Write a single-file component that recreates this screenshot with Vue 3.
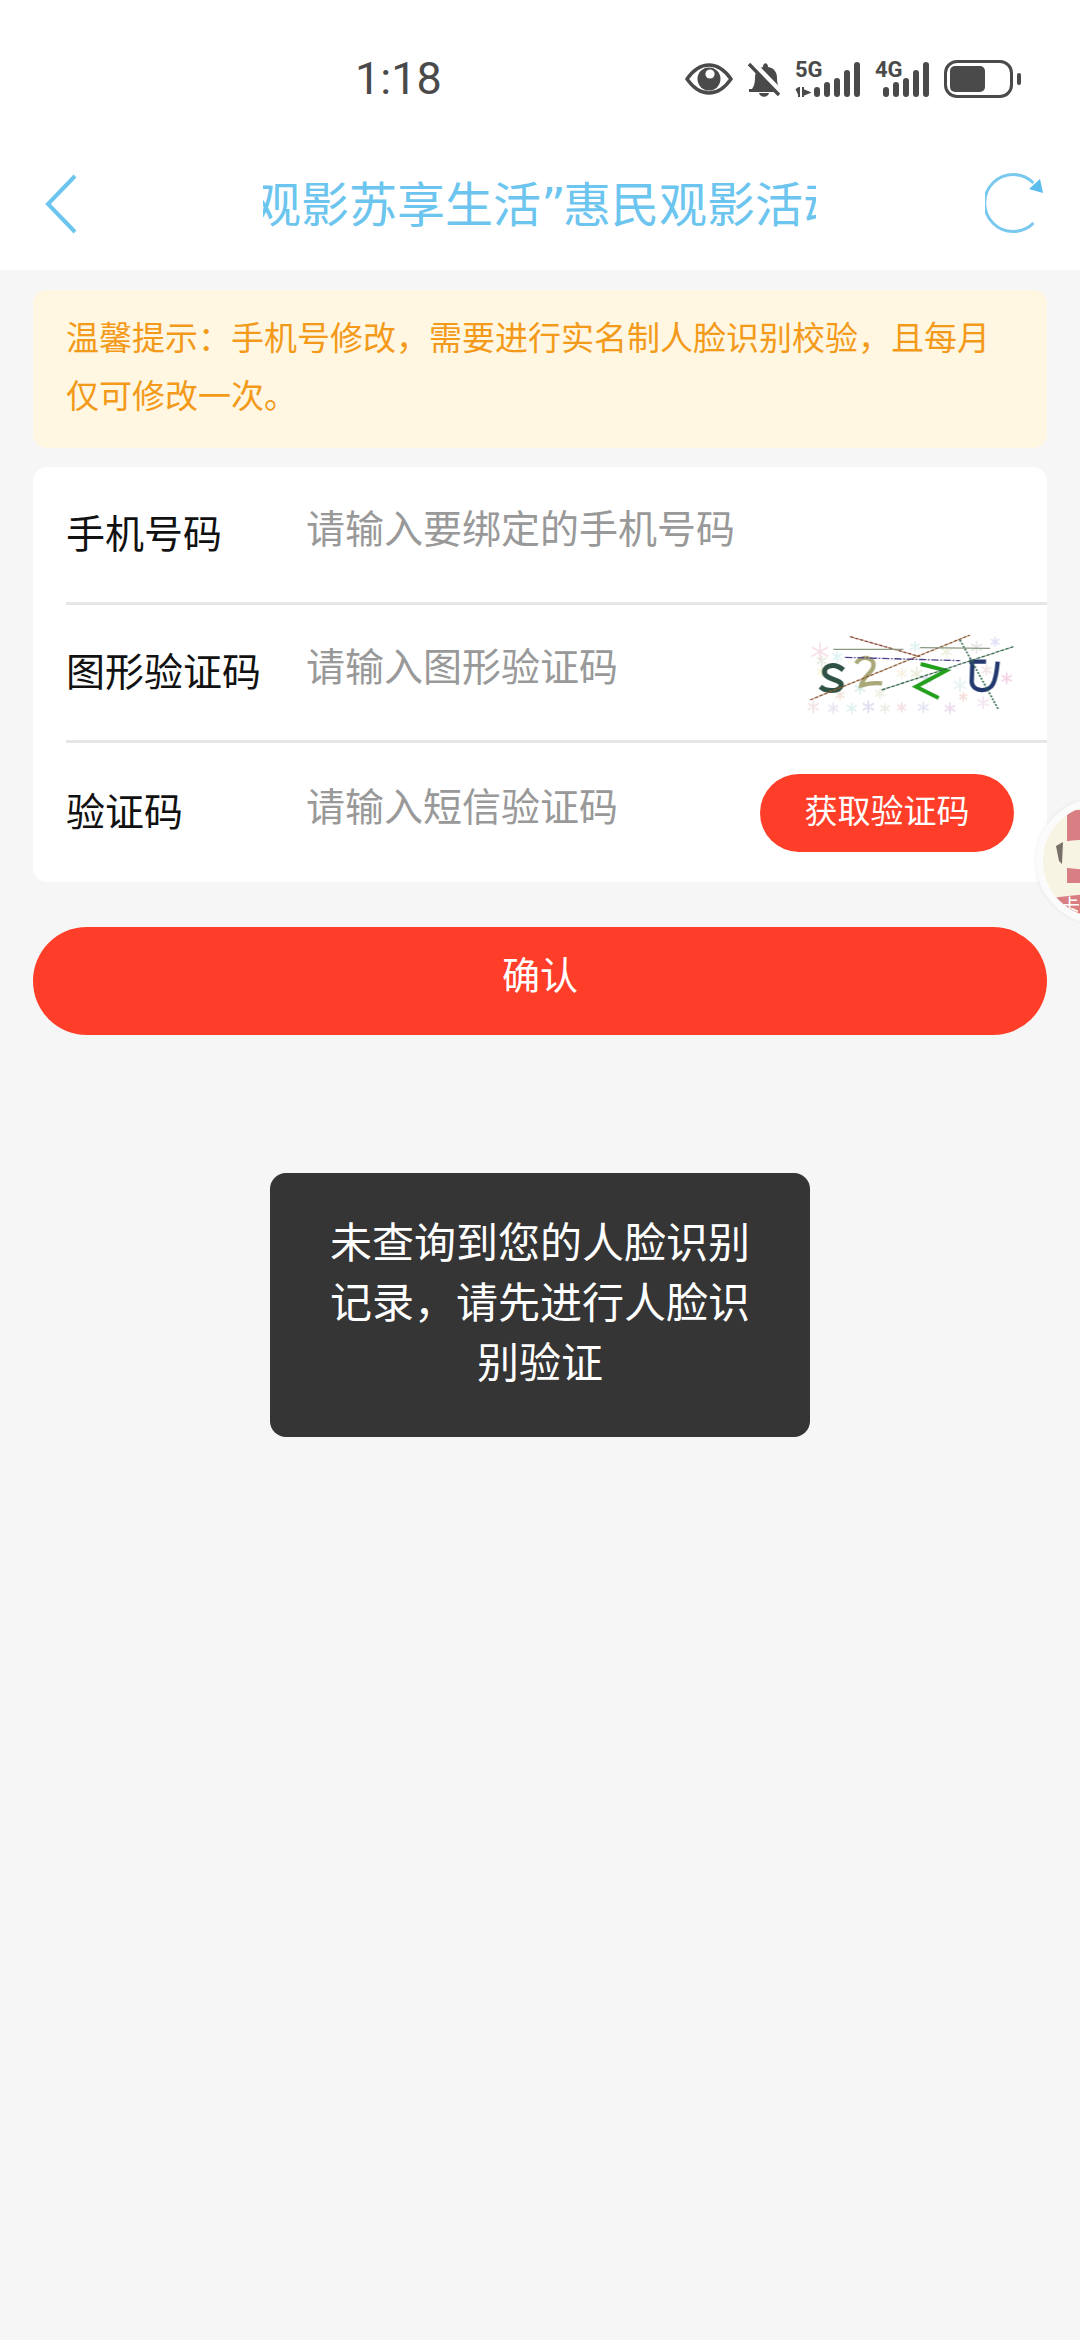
<template>
  <div class="page">
    <div class="statusbar">
      <span class="time">1:18</span>
      <div class="status-icons">
        <svg viewBox="0 0 48 32" width="48" height="32">
          <path d="M2 16C9 6 16 2 24 2s15 4 22 14c-7 10-14 14-22 14S9 26 2 16z" fill="none" stroke="#4a4a4a" stroke-width="3.4" />
          <circle cx="24" cy="16" r="11.5" fill="#4a4a4a" />
          <path d="M14 13a5.5 5.5 0 0 0 10 3 6 6 0 0 1-4-8c-3 0-5 2-6 5z" fill="#4a4a4a" />
          <circle cx="25" cy="11" r="4.6" fill="#fff" />
        </svg>
        <svg viewBox="0 0 32 36" width="32" height="36">
          <path d="M4 28c2-3 3-6 3-11 0-6 3-10 8-11 0-5 5-5 5 0 6 1 9 5 9 11 0 5 1 8 3 11z" fill="#4a4a4a" />
          <path d="M1 28h30v3H1zM11 32h10c-1 5-9 5-10 0z" fill="#4a4a4a" />
          <path d="M4 1l30 31" stroke="#fff" stroke-width="5" />
          <path d="M1 3l30 31" stroke="#4a4a4a" stroke-width="3.4" />
        </svg>
        <div class="signal">
          <div class="net net-5g">
            <b>5G</b>
            <svg viewBox="0 0 16 10" width="16" height="10">
              <path d="M1 3l3-2v9M8 0v10M8 3l6 2.5-6 2.5z" stroke="#4a4a4a" stroke-width="2" fill="#4a4a4a" />
            </svg>
          </div>
          <div class="bars">
            <i v-for="h in bars" :key="h" :style="{ height: h + 'px' }"></i>
          </div>
        </div>
        <div class="signal">
          <div class="net net-4g"><b>4G</b></div>
          <div class="bars">
            <i v-for="h in bars" :key="h" :style="{ height: h + 'px' }"></i>
          </div>
        </div>
        <div class="battery">
          <div class="battery-body"><div class="battery-fill"></div></div>
          <div class="battery-tip"></div>
        </div>
      </div>
    </div>

    <div class="navbar">
      <svg class="nav-back" viewBox="0 0 32 60" width="32" height="60">
        <path d="M30 2L3 30l27 28" fill="none" stroke="#6cc5ee" stroke-width="4" />
      </svg>
      <div class="nav-title"><span>观影苏享生活<em>”</em>惠民观影活动</span></div>
      <svg class="nav-refresh" viewBox="0 0 60 62" width="60" height="62">
        <path d="M48.500 51A28.500 28.500 0 1 1 48.500 11" fill="none" stroke="#79c9ef" stroke-width="3" />
        <path d="M55 7L58 21L44 17z" fill="#5cbcec" />
      </svg>
    </div>

    <div class="content">
      <div class="notice">温馨提示：手机号修改，需要进行实名制人脸识别校验，且每月仅可修改一次。</div>

      <div class="form">
        <div v-for="row in rows" :key="row.label" class="form-row">
          <div class="form-label">{{ row.label }}</div>
          <div class="form-hint">{{ row.hint }}</div>
          <svg v-if="row.captcha" class="captcha" viewBox="0 0 720 330" width="240" height="110">
            <defs>
              <filter id="soft"><feGaussianBlur stdDeviation="1.500" /></filter>
            </defs>
            <g filter="url(#soft)">
              <g v-for="f in flakes" :key="f.x + '-' + f.y" :stroke="f.c" stroke-width="5" stroke-linecap="round" opacity="0.75">
                <path :d="flakePath(f)" />
              </g>
              <path d="M160 150C130 125 95 140 105 163c10 18 55 16 48 35-6 18-45 18-62 2" fill="none" stroke="#2f5245" stroke-width="15" />
              <path d="M198 130c15-25 58-20 52 10-4 20-32 30-36 56 20-6 42-8 62-6" fill="none" stroke="#a8a878" stroke-width="13" />
              <path d="M392 132l76 20-90 48 68 34" fill="none" stroke="#24a01e" stroke-width="12" />
              <path d="M547 125l-2 62c4 30 52 30 64 5 10-20 12-45 14-67M538 125h50" fill="none" stroke="#22386e" stroke-width="13" />
              <path d="M180 50L390 110" stroke="#8a4a3a" stroke-width="4" stroke-dasharray="12 3" />
              <path d="M60 240L540 45" stroke="#8a5a32" stroke-width="4" stroke-dasharray="12 3" />
              <path d="M130 88H340M390 83L600 85" stroke="#8a9a80" stroke-width="4" />
              <path d="M165 112L510 122" stroke="#4a3f8a" stroke-width="4" stroke-dasharray="22 5 5 5" />
              <path d="M275 210L670 80" stroke="#3a6a50" stroke-width="4" stroke-dasharray="12 3" />
              <path d="M510 60L625 268" stroke="#3a6a50" stroke-width="5" stroke-dasharray="6 4" />
            </g>
          </svg>
          <button v-if="row.sms" class="sms-btn">获取验证码</button>
        </div>
      </div>

      <button class="confirm">确认</button>
    </div>

    <div class="toast">未查询到您的人脸识别记录，请先进行人脸识别验证</div>

    <div class="float-badge">
      <svg viewBox="0 0 112 112" width="112" height="112">
        <path d="M24 5h50v73H24z" fill="#d97f83" />
        <path d="M19 37c14-3 40-3 60 0v25c-20 4-46 3-60 0z" fill="#f7f4e3" />
        <path d="M13 41l7-4-1 22-3-3z" fill="#77706a" />
        <path d="M0 95q56-12 112 0v17H0z" fill="#d97f83" />
      </svg>
      <span class="badge-text">卡</span>
    </div>
  </div>
</template>

<script setup>
const bars = [10, 15, 19, 27, 35]

const rows = [
  { label: '手机号码', hint: '请输入要绑定的手机号码' },
  { label: '图形验证码', hint: '请输入图形验证码', captcha: true },
  { label: '验证码', hint: '请输入短信验证码', sms: true },
]

// 验证码背景的雪花噪点
const flakes = [
  { x: 90, y: 95, r: 26, c: '#f3d3dc' },
  { x: 95, y: 122, r: 15, c: '#dfe6d8' },
  { x: 142, y: 110, r: 15, c: '#d4f0ee' },
  { x: 95, y: 155, r: 14, c: '#f6f2c8' },
  { x: 70, y: 260, r: 17, c: '#ecd9dc' },
  { x: 130, y: 265, r: 15, c: '#e4dcee' },
  { x: 185, y: 265, r: 15, c: '#d7ecec' },
  { x: 235, y: 260, r: 17, c: '#d5cde8' },
  { x: 285, y: 265, r: 14, c: '#e4e6d8' },
  { x: 335, y: 262, r: 14, c: '#f0d8d8' },
  { x: 400, y: 262, r: 16, c: '#d8dcec' },
  { x: 480, y: 265, r: 16, c: '#e8cfe8' },
  { x: 650, y: 175, r: 16, c: '#eec4dc' },
  { x: 580, y: 248, r: 18, c: '#f0dcec' },
  { x: 520, y: 230, r: 12, c: '#f0d4cc' },
  { x: 510, y: 195, r: 20, c: '#dcecec' },
  { x: 380, y: 160, r: 18, c: '#e4e8d0' },
  { x: 335, y: 160, r: 15, c: '#f4ecd8' },
  { x: 210, y: 205, r: 16, c: '#cfeae4' },
  { x: 150, y: 225, r: 14, c: '#ecdcd0' },
  { x: 270, y: 220, r: 15, c: '#e4ecd8' },
  { x: 615, y: 65, r: 13, c: '#d8d8f4' },
  { x: 560, y: 82, r: 17, c: '#dcdce0' },
  { x: 375, y: 80, r: 14, c: '#d4ecec' },
  { x: 470, y: 95, r: 17, c: '#e8ecd4' },
  { x: 590, y: 150, r: 15, c: '#ecdcdc' },
  { x: 410, y: 178, r: 14, c: '#d4cce8' },
]

const flakePath = ({ x, y, r }) => {
  const dx = Math.round(r * 0.87)
  const dy = Math.round(r * 0.5)
  return `M${x} ${y - r}V${y + r}M${x - dx} ${y - dy}L${x + dx} ${y + dy}M${x - dx} ${y + dy}L${x + dx} ${y - dy}`
}
</script>

<style>
html, body { margin: 0; background: #f6f6f6; }
</style>

<style scoped>
.page {
  position: relative;
  width: 1080px;
  height: 2340px;
  overflow: hidden;
  background: #f6f6f6;
  font-family: "Roboto", "Noto Sans CJK SC", sans-serif;
}
.statusbar {
  height: 147px;
  background: #fff;
  display: flex;
  align-items: flex-start;
  padding-top: 54px;
  box-sizing: border-box;
}
.time {
  margin-left: 355px;
  font-size: 45px;
  line-height: 50px;
  color: #4a4a4a;
}
.status-icons {
  margin-left: auto;
  margin-right: 59px;
  display: flex;
  align-items: center;
  height: 50px;
  gap: 15px;
}
.signal { display: flex; align-items: flex-end; height: 36px; }
.net { display: flex; flex-direction: column; align-self: stretch; }
.net b { display: block; font-size: 22px; line-height: 18px; color: #4a4a4a; white-space: nowrap; }
.net svg { margin-top: 8px; }
.net-5g { width: 19px; }
.net-4g { width: 8px; }
.bars { display: flex; align-items: flex-end; gap: 4px; }
.bars i { width: 6px; background: #4a4a4a; border-radius: 3px; display: block; }
.battery { display: flex; align-items: center; gap: 4px; }
.battery-body {
  width: 69px;
  height: 38px;
  border: 3px solid #4a4a4a;
  border-radius: 13px;
  padding: 3px;
  box-sizing: border-box;
}
.battery-fill { width: 35px; height: 100%; background: #4a4a4a; border-radius: 5px; }
.battery-tip { width: 4px; height: 12px; background: #4a4a4a; border-radius: 2px; }

.navbar {
  height: 123px;
  background: #fff;
  display: flex;
  align-items: center;
  padding: 0 35px 0 45px;
  box-sizing: border-box;
}
.nav-back { flex: none; margin-top: -9px; }
.nav-title {
  flex: none;
  width: 553px;
  margin: -6px 0 0 186px;
  overflow: hidden;
}
.nav-title span {
  display: block;
  white-space: nowrap;
  font-size: 48px;
  line-height: 62px;
  color: #6cc5ee;
  margin-left: -10px;
}
.nav-title em { font-style: normal; font-family: "DejaVu Sans", sans-serif; margin-right: -3px; }
.nav-refresh { flex: none; margin: -11px 0 0 auto; }

.content { padding: 20px 33px 0; }
.notice {
  background: #fff7e1;
  border-radius: 14px;
  padding: 20px 33px 23px;
  font-size: 33px;
  line-height: 58px;
  color: #f39a1a;
  box-sizing: border-box;
  height: 158px;
}
.form {
  margin-top: 19px;
  background: #fff;
  border-radius: 14px;
  padding-left: 33px;
}
.form-row {
  height: 135px;
  display: flex;
  align-items: center;
  border-bottom: 3px solid #e6e6e6;
  padding-right: 33px;
}
.form-row:last-child { border-bottom: none; height: 139px; }
.form-label {
  width: 240px;
  flex: none;
  font-size: 39px;
  color: #111;
  margin-top: -8px;
}
.form-hint {
  flex: 1;
  font-size: 39px;
  color: #999;
  margin-top: -17px;
}
.captcha { flex: none; margin-right: -16px; margin-top: 4px; }
.sms-btn {
  width: 254px;
  height: 78px;
  border: none;
  border-radius: 39px;
  background: #ff3e2a;
  color: #fff;
  font-family: inherit;
  font-size: 33px;
  padding: 0 0 7px;
}
.confirm {
  display: block;
  width: 100%;
  height: 108px;
  margin-top: 45px;
  border: none;
  border-radius: 54px;
  background: #ff3e2a;
  color: #fff;
  font-family: inherit;
  font-size: 38px;
  padding: 0 0 18px;
}
.toast {
  position: absolute;
  left: 270px;
  top: 1173px;
  width: 540px;
  height: 264px;
  box-sizing: border-box;
  padding: 41px 50px 0;
  background: #353535;
  border-radius: 16px;
  color: #fff;
  font-size: 42px;
  line-height: 60px;
  text-align: center;
}
.float-badge {
  position: absolute;
  left: 1036px;
  top: 798px;
  width: 126px;
  height: 126px;
  border-radius: 50%;
  border: 7px solid #fbfbfb;
  background: #f7f4e3;
  box-sizing: border-box;
  overflow: hidden;
  box-shadow: 0 0 4px rgba(0, 0, 0, 0.08);
}
.float-badge svg { display: block; }
.badge-text {
  position: absolute;
  left: 17px;
  top: 90px;
  color: #fff;
  font-size: 20px;
  line-height: 24px;
}
</style>
